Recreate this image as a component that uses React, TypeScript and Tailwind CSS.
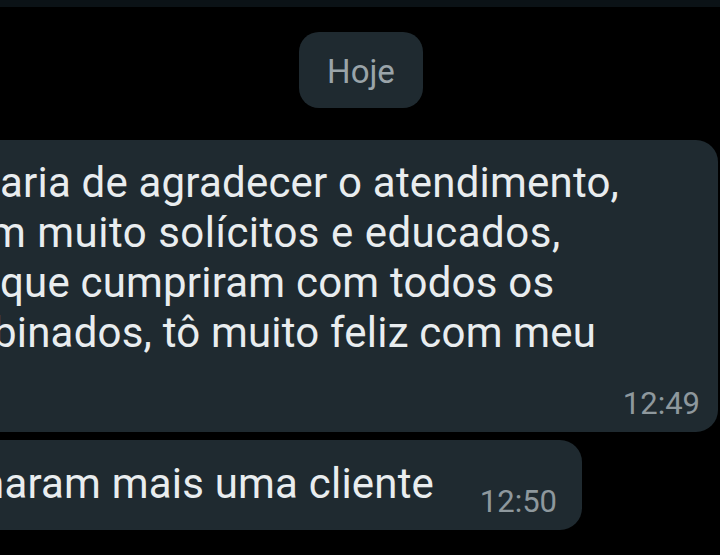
const lines = [
  { text: "aria de agradecer o atendimento,", offset: "ml-[0px]" },
  { text: "m muito solícitos e educados,", offset: "ml-[-11px] tracking-[0.5px]" },
  { text: "que cumpriram com todos os", offset: "ml-[0px]" },
  { text: "binados, tô muito feliz com meu", offset: "ml-[-7px]" },
];

export default function App() {
  return (
    <div className="w-[720px] h-[555px] overflow-hidden bg-black font-['Roboto',sans-serif]">
      <div className="h-[7px] bg-[#0b1216]" />

      <div className="flex justify-center pt-[25px] pl-[2px]">
        <div className="w-[124px] h-[76px] rounded-[20px] bg-[#1f2a30] flex items-center justify-center pt-[3px] text-[33px] text-[#9aa4a9]">
          Hoje
        </div>
      </div>

      <div className="mt-[32px] ml-[-30px] w-[748px] rounded-[22px] bg-[#1f2a30] overflow-hidden pt-[18px] pb-[10px] pr-[18px]">
        <div className="pl-[30px] text-[42px] leading-[50px] tracking-[0.2px] text-[#e9edef] whitespace-nowrap">
          {lines.map((l) => (
            <div key={l.text} className={l.offset}>
              {l.text}
            </div>
          ))}
        </div>
        <div className="mt-[28px] flex justify-end text-[31px] leading-[36px] text-[#8e989d]">
          12:49
        </div>
      </div>

      <div className="mt-[8px] ml-[-30px] w-[612px] rounded-[22px] bg-[#1f2a30] overflow-hidden pt-[19px] pb-[10px] pr-[25px] flex items-end justify-between">
        <div className="pl-[30px] pb-[11px] text-[42px] leading-[50px] tracking-[0.2px] text-[#e9edef] whitespace-nowrap">
          <div className="ml-[-19px]">naram mais uma cliente</div>
        </div>
        <div className="text-[31px] leading-[36px] text-[#8e989d]">12:50</div>
      </div>
    </div>
  );
}
